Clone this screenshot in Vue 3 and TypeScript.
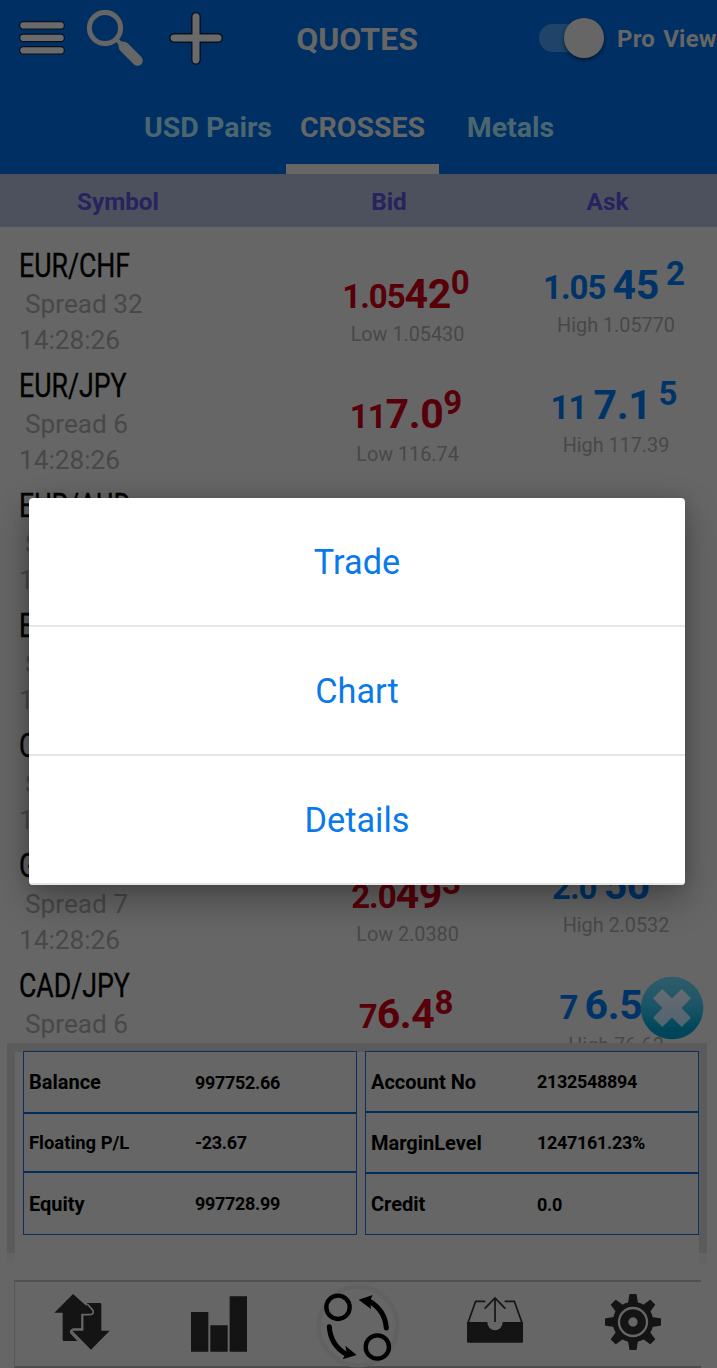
<script setup lang="ts">
interface Price { a: string; b: string; c: string }
interface Quote {
  symbol: string
  spread: string
  time: string
  bid: Price
  ask: Price
  low: string
  high: string
}

const quotes: Quote[] = [
  { symbol: 'EUR/CHF', spread: '32', time: '14:28:26', bid: { a: '1.05', b: '42', c: '0' }, ask: { a: '1.05', b: '45', c: '2' }, low: '1.05430', high: '1.05770' },
  { symbol: 'EUR/JPY', spread: '6', time: '14:28:26', bid: { a: '11', b: '7.0', c: '9' }, ask: { a: '11', b: '7.1', c: '5' }, low: '116.74', high: '117.39' },
  { symbol: 'EUR/AUD', spread: '', time: '14:28:26', bid: { a: '', b: '', c: '' }, ask: { a: '', b: '', c: '' }, low: '', high: '' },
  { symbol: 'EUR', spread: '', time: '14:28:26', bid: { a: '', b: '', c: '' }, ask: { a: '', b: '', c: '' }, low: '', high: '' },
  { symbol: 'CHF', spread: '', time: '14:28:26', bid: { a: '', b: '', c: '' }, ask: { a: '', b: '', c: '' }, low: '', high: '' },
  { symbol: 'GBP', spread: '7', time: '14:28:26', bid: { a: '2.0', b: '49', c: '3' }, ask: { a: '2.0', b: '50', c: '0' }, low: '2.0380', high: '2.0532' },
  { symbol: 'CAD/JPY', spread: '6', time: '', bid: { a: '7', b: '6.4', c: '8' }, ask: { a: '7', b: '6.5', c: '' }, low: '', high: '76.62' },
]

const tabs = ['USD Pairs', 'CROSSES', 'Metals']
const activeTab = 'CROSSES'
const actions = ['Trade', 'Chart', 'Details']

const account = [
  [
    { label: 'Balance', value: '997752.66' },
    { label: 'Floating P/L', value: '-23.67', small: true },
    { label: 'Equity', value: '997728.99' },
  ],
  [
    { label: 'Account No', value: '2132548894' },
    { label: 'MarginLevel', value: '1247161.23%' },
    { label: 'Credit', value: '0.0' },
  ],
]
</script>

<template>
  <div class="screen">
    <header class="top">
      <div class="bar">
        <svg class="i-menu" viewBox="0 0 48 36" width="48" height="36">
          <g fill="#6a6a6a" stroke="#08101f" stroke-width="1.3">
            <rect x="1.6" y="1.6" width="44.8" height="7.6" rx="3.8" />
            <rect x="1.6" y="14.1" width="44.8" height="7.6" rx="3.8" />
            <rect x="1.6" y="26.6" width="44.8" height="7.6" rx="3.8" />
          </g>
        </svg>
        <svg class="i-search" viewBox="0 0 56 56" width="56" height="56">
          <circle cx="18" cy="18" r="15.6" fill="none" stroke="#666" stroke-width="5" />
          <path d="M29 29l7 7" stroke="#666" stroke-width="4" />
          <path d="M37 37l13.5 13.5" stroke="#666" stroke-width="10.5" stroke-linecap="round" />
          <path d="M32 36.500l4.500 -4.500" stroke="#666" stroke-width="2.500" />
        </svg>
        <svg class="i-plus" viewBox="0 0 54 54" width="54" height="54">
          <path
            d="M27 1.600a4 4 0 0 1 4.200 4V22.800H49a4.200 4.200 0 0 1 0 8.400H31.200V49a4.200 4.200 0 0 1-8.400 0V31.200H5a4.200 4.200 0 0 1 0-8.400H22.800V5.600a4 4 0 0 1 4.200-4Z"
            fill="#6a6a6a" stroke="#08101f" stroke-width="1.4"
          />
        </svg>
        <h1 class="title">QUOTES</h1>
        <span class="toggle"><span class="thumb"></span></span>
        <span class="pro">Pro View</span>
      </div>
      <nav class="tabs">
        <span v-for="t in tabs" :key="t" class="tab" :class="{ active: t === activeTab }">{{ t }}</span>
      </nav>
    </header>

    <div class="cols"><span>Symbol</span><span>Bid</span><span>Ask</span></div>

    <main class="list">
      <div v-for="(q, i) in quotes" :key="i" class="row">
        <div class="info">
          <div class="sym"><span>{{ q.symbol }}</span></div>
          <div class="spread">Spread {{ q.spread }}</div>
          <div v-if="q.time" class="time">{{ q.time }}</div>
        </div>
        <div class="cell bid">
          <div class="price">{{ q.bid.a }}<b>{{ q.bid.b }}</b><i>{{ q.bid.c }}</i></div>
          <div v-if="q.low" class="range">Low {{ q.low }}</div>
        </div>
        <div class="cell ask">
          <div class="price">{{ q.ask.a }} <b>{{ q.ask.b }}</b> <i :class="{ gap: !q.ask.c }">{{ q.ask.c }}</i></div>
          <div v-if="q.high" class="range">High {{ q.high }}</div>
        </div>
      </div>
    </main>

    <svg class="fab" viewBox="0 0 64 64" width="64" height="64">
      <defs>
        <linearGradient id="fab-bg" x1="0" y1="0" x2="0" y2="1">
          <stop offset="0" stop-color="#315c69" />
          <stop offset=".45" stop-color="#1b5567" />
          <stop offset=".8" stop-color="#00485c" />
          <stop offset="1" stop-color="#004357" />
        </linearGradient>
        <linearGradient id="fab-x" x1="0" y1="0" x2="0" y2="1">
          <stop offset="0" stop-color="#666b70" />
          <stop offset="1" stop-color="#52636f" />
        </linearGradient>
      </defs>
      <circle cx="32" cy="32" r="31.300" fill="url(#fab-bg)" />
      <path d="M22.300 13L32 22.500 41.700 13 51 22.200 41.500 32 51 41.800 41.700 51 32 41.500 22.300 51 13 41.800 22.500 32 13 22.200Z" fill="url(#fab-x)" />
    </svg>

    <section class="panel">
      <div class="sheet">
        <div v-for="(col, c) in account" :key="c" class="box" :class="c ? 'right' : 'left'">
          <div v-for="item in col" :key="item.label" class="line">
            <span class="label" :class="{ small: 'small' in item }">{{ item.label }}</span>
            <span class="value">{{ item.value }}</span>
          </div>
        </div>
      </div>
    </section>
    <div class="fade"></div>

    <footer class="nav">
      <div class="slot">
        <svg viewBox="162 102 168 168" width="56" height="56" fill="#141414">
          <path d="M262 129h38q4 0 4 4v79h25L273 269 217 212h33V162Z" />
          <path d="M219 102L276 153q5 9-5 9H244V206H219q-12 6-3 13L236 243H192q-4 0-4-4V158H163Z" />
          <path d="M262 132L279 151q4 13-9 13H247V207H220q-12 4-6 13L235 243" fill="none" stroke="#666" stroke-width="5" />
        </svg>
      </div>
      <div class="slot">
        <svg class="bars" viewBox="573 109 168 168" width="56" height="56" fill="#141414">
          <path d="M573 157h52v119h-52zM631 197h52v79h-52zM689 110h52v166h-52z" />
        </svg>
      </div>
      <div class="slot">
        <svg class="cycle" viewBox="43 74 258 252" width="86" height="84">
          <circle cx="172" cy="200" r="118" fill="none" stroke="#616161" stroke-width="13" />
          <g fill="none" stroke="#000" stroke-width="13">
            <circle cx="112" cy="144" r="35" />
            <circle cx="230" cy="263" r="35" />
            <path d="M86 202C88 238 105 266 136 284M257 206C254 170 237 143 205 125" stroke-width="15" stroke-linecap="round" />
          </g>
          <path d="M168 287L134 259 138 279 126 300ZM174 121L216 107 208 124 211 149Z" />
        </svg>
      </div>
      <div class="slot">
        <svg class="tray" viewBox="501 102 168 168" width="56" height="56">
          <path d="M503 186h59a23 25 0 0 0 46 0h59q2 0 2 2v57q0 3-3 3H504q-3 0-3-3v-57q0-2 2-2Z" fill="#141414" />
          <path d="M504 188L527 124H556M614 124H643L666 188M585 186V114M554 146L585 114 616 146" fill="none" stroke="#141414" stroke-width="5" />
        </svg>
      </div>
      <div class="slot">
        <svg viewBox="-84 -84 168 168" width="56" height="56" fill="#141414">
          <circle r="61" />
          <path v-for="n in 8" :key="n" d="M-15 -56L-11 -82q0-2 2-2H9q2 0 2 2L15 -56Z" :transform="`rotate(${n * 45})`" />
          <circle r="42" fill="none" stroke="#666" stroke-width="7" />
          <circle r="14" fill="#666" />
        </svg>
      </div>
    </footer>

    <div class="dialog">
      <div v-for="a in actions" :key="a" class="action">{{ a }}</div>
    </div>
  </div>
</template>

<style>
body { margin: 0; background: #666; }
</style>

<style scoped>
.screen {
  position: relative;
  width: 717px;
  height: 1368px;
  overflow: hidden;
  display: flex;
  flex-direction: column;
  background: #666;
  font-family: Roboto, "Liberation Sans", sans-serif;
  color: #000;
}
svg { display: block; flex: none; }
.top { flex: none; height: 174px; background: #003063; display: flex; flex-direction: column; }
.bar { height: 76px; display: flex; align-items: center; color: #666; font-weight: 700; }
.i-menu { margin-left: 18px; }
.i-search { margin-left: 21px; }
.i-plus { margin-left: 26px; }
.title { margin: 2px 0 0 60px; width: 148px; text-align: center; font-size: 32px; line-height: 40px; }
.toggle { margin-left: 108px; width: 62px; height: 28px; border-radius: 14px; background: #1f4468; display: flex; justify-content: flex-end; align-items: center; }
.thumb { width: 40px; height: 40px; margin-right: -3px; flex: none; border-radius: 50%; background: #666; box-shadow: 0 2px 4px rgba(0, 0, 0, .5); }
.pro { margin: 2px 0 0 16px; font-size: 24px; letter-spacing: .2px; word-spacing: 2px; white-space: nowrap; }
.tabs { height: 98px; padding-left: 130px; display: grid; grid-template-columns: 156px 153px 143px; }
.tab { box-sizing: border-box; text-align: center; padding-top: 32px; font-size: 28.5px; line-height: 40px; font-weight: 700; color: #4c6670; border-bottom: 10px solid transparent; }
.tab.active { color: #666; border-bottom-color: #666; }
.cols { flex: none; height: 53px; display: grid; grid-template-columns: 236px 306px 131px; background: #4d515d; text-align: center; font-size: 24.3px; font-weight: 700; line-height: 56px; color: #27235f; }
.list { flex: none; height: 816px; box-sizing: border-box; padding-top: 19px; overflow: hidden; }
.row { height: 120px; display: grid; grid-template-columns: 300px 215px 202px; }
.sym { padding-left: 19px; height: 40px; line-height: 38px; font-size: 34px; }
.sym span { display: inline-block; transform: scaleX(.785); transform-origin: 0 50%; -webkit-text-stroke: .35px #000; }
.spread, .time { padding-left: 19px; line-height: 36px; font-size: 26.200px; color: #484848; }
.spread { padding-left: 25px; }
.cell { text-align: center; }
.bid { padding-top: 25px; color: #58000a; }
.ask { padding-top: 16px; color: #003468; }
.price { padding-right: 4px; font-size: 33px; font-weight: 700; line-height: 46px; height: 46px; white-space: pre; letter-spacing: -1px; }
.ask .price { padding-right: 5px; }
.price b { font-size: 41px; font-weight: 700; line-height: 46px; letter-spacing: -.4px; }
.price i { font-style: normal; line-height: 0; vertical-align: 14px; }
.price i.gap { display: inline-block; width: 18px; }
.range { margin-top: 3px; font-size: 19.800px; line-height: 30px; color: #484848; }
.fab { position: absolute; left: 640px; top: 976px; }
.panel { flex: none; width: 700px; height: 210px; margin-left: 7px; background: #5b5b5b; }
.sheet { width: 684px; height: 210px; margin: 0 8px; box-sizing: border-box; padding: 8px 0 0 8px; display: flex; gap: 8px; background: linear-gradient(#5b5b5b 9px, #666 9px); }
.fade { flex: none; width: 684px; height: 10px; margin-left: 7px; border: solid #636363; border-width: 0 8px; }
.box { box-sizing: border-box; width: 334px; height: 184px; border: 1px solid #0a315c; display: grid; }
.left { grid-template-rows: 62px 59px 61px; }
.right { grid-template-rows: 61px 61px 60px; }
.line { box-sizing: border-box; display: grid; grid-template-columns: 166px 1fr; align-items: center; padding-left: 5px; border-bottom: 2px solid #002e5c; font-weight: 700; white-space: nowrap; }
.line:last-child { border-bottom: 0; }
.label { font-size: 20px; }
.value { font-size: 18px; letter-spacing: -.32px; }
.label.small { font-size: 18.400px; }
.nav { flex: none; margin: 17px 0 0 14px; width: 687px; height: 88px; box-sizing: border-box; border-top: 2px solid #515151; border-left: 1px solid #585858; border-bottom: 2px solid #4c4c4c; display: grid; grid-template-columns: 134px 140px 137px 138px 137px; }
.slot { display: flex; justify-content: center; padding-top: 12px; }
.bars { margin-top: 2px; }
.cycle { margin-top: -10px; }
.dialog { position: absolute; left: 29px; top: 498px; width: 656px; height: 387px; border-radius: 4px; overflow: hidden; background: #fff; box-shadow: 0 14px 36px rgba(0, 0, 0, .32), 0 0 16px rgba(0, 0, 0, .12); }
.action { box-sizing: border-box; height: 129px; line-height: 129px; border-bottom: 2px solid #e6e6e6; text-align: center; font-size: 34.300px; color: #0a7aea; }
</style>
